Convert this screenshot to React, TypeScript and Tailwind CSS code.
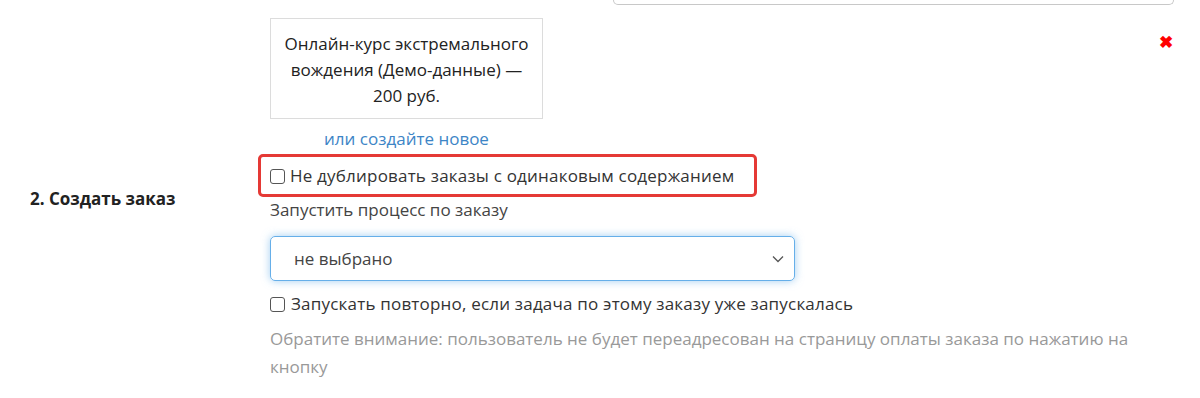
import React from "react";

function Checkbox() {
  return (
    <span className="inline-block w-[15px] h-[15px] border border-[#555] rounded-[3px] bg-white shrink-0" />
  );
}

export default function App() {
  return (
    <div className="w-[1200px] h-[398px] bg-white text-[#333] overflow-hidden" style={{ fontFamily: '"Open Sans", "Noto Sans", sans-serif' }}>
      {/* top partial input */}
      <div className="flex">
        <div className="ml-[613px] w-[561px] h-[5px] border border-t-0 border-[#c8c8c8] rounded-b-[5px]" />
      </div>
      {/* product card row */}
      <div className="flex mt-[13px]">
        <div className="w-[270px] shrink-0" />
        <div className="flex flex-col items-start">
          <div className="w-[273px] border border-[#dcdcdc] px-[10px] pt-[12px] pb-[9px] text-center text-[17px] leading-[26px] text-[#222]">
            Онлайн-курс экстремального вождения (Демо-данные) — 200 руб.
          </div>
          <div className="w-[273px] text-center mt-[9px] text-[17px] leading-[22px] text-[#3d85c6]">или создайте новое</div>
        </div>
        <div className="flex-1 flex justify-end pr-[27px] pt-[15px]">
          <span className="text-[#ff0000] text-[17px] font-bold leading-none">✖</span>
        </div>
      </div>
      {/* section 2 */}
      <div className="flex mt-[11px]">
        <div className="w-[270px] shrink-0 pl-[30px] pt-[25px] text-[17px] font-bold text-[#222]">2. Создать заказ</div>
        <div className="w-[890px] flex flex-col items-start">
          <div className="relative flex items-center gap-[5px] h-[30px] text-[17px] tracking-[0.2px]">
            <Checkbox />
            <span>Не дублировать заказы с одинаковым содержанием</span>
            <div className="absolute left-[-12px] right-[-23px] top-[-7px] bottom-[-6px] border-[3px] border-[#e53935] rounded-[5px]" />
          </div>
          <div className="mt-[8px] text-[17px] leading-[22px] text-[#444]">Запустить процесс по заказу</div>
          <div className="mt-[15px] w-[525px] h-[45px] border border-[#66afe9] rounded-[5px] shadow-[0_0_8px_rgba(102,175,233,0.6)] flex items-center justify-between pl-[23px] pr-[10px] text-[17px] text-[#444]">
            <span>не выбрано</span>
            <svg width="12" height="8" viewBox="0 0 12 8" fill="none" stroke="#555" strokeWidth="1.3"><path d="M1 1.5l5 5 5-5" /></svg>
          </div>
          <div className="mt-[12px] flex items-center gap-[6px] text-[17px] leading-[22px] tracking-[0.2px]">
            <Checkbox />
            <span>Запускать повторно, если задача по этому заказу уже запускалась</span>
          </div>
          <div className="mt-[10px] text-[17px] leading-[28px] text-[#999]">
            Обратите внимание: пользователь не будет переадресован на страницу оплаты заказа по нажатию на кнопку
          </div>
        </div>
      </div>
    </div>
  );
}
